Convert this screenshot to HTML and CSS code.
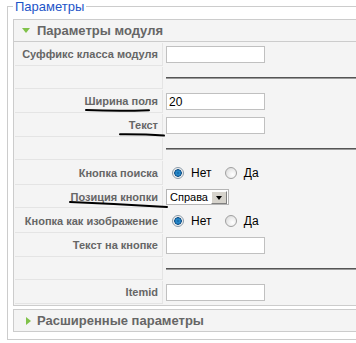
FILE: index.html
```html
<!DOCTYPE html>
<html lang="ru">
<head>
  <meta charset="UTF-8" />
  <title>Параметры</title>
  <link rel="stylesheet" href="styles.css">
</head>
<body>

  <div class="page">
    <fieldset class="adminform">
      <legend>Параметры</legend>

      <div class="panel">
        <h3 class="panel-title"><span class="arrow down"></span>Параметры модуля</h3>
        <table class="paramlist">
          <tr class="r-input">
            <td class="key">Суффикс класса модуля</td>
            <td class="val"><input type="text" class="text"></td>
          </tr>
          <tr class="r-spacer">
            <td class="key"></td>
            <td class="val"><div class="rule"></div></td>
          </tr>
          <tr class="r-input">
            <td class="key">Ширина поля</td>
            <td class="val"><input type="text" class="text" value="20"></td>
          </tr>
          <tr class="r-input">
            <td class="key">Текст</td>
            <td class="val"><input type="text" class="text"></td>
          </tr>
          <tr class="r-spacer">
            <td class="key"></td>
            <td class="val"><div class="rule"></div></td>
          </tr>
          <tr class="r-radio">
            <td class="key">Кнопка поиска</td>
            <td class="val">
              <span class="radio checked"></span><span class="opt">Нет</span>
              <span class="radio"></span><span class="opt">Да</span>
            </td>
          </tr>
          <tr class="r-select">
            <td class="key">Позиция кнопки</td>
            <td class="val">
              <div class="select"><span class="sel-text">Справа</span><span class="sel-btn"></span></div>
            </td>
          </tr>
          <tr class="r-radio">
            <td class="key">Кнопка как изображение</td>
            <td class="val">
              <span class="radio checked"></span><span class="opt">Нет</span>
              <span class="radio"></span><span class="opt">Да</span>
            </td>
          </tr>
          <tr class="r-input">
            <td class="key">Текст на кнопке</td>
            <td class="val"><input type="text" class="text"></td>
          </tr>
          <tr class="r-spacer">
            <td class="key"></td>
            <td class="val"><div class="rule"></div></td>
          </tr>
          <tr class="r-input">
            <td class="key">Itemid</td>
            <td class="val"><input type="text" class="text"></td>
          </tr>
        </table>
      </div>

      <div class="panel">
        <h3 class="panel-title"><span class="arrow right"></span>Расширенные параметры</h3>
      </div>
    </fieldset>

    <!-- hand-drawn marks over the labels -->
    <svg class="marks" width="356" height="343" viewBox="0 0 356 343">
      <path d="M86 110 Q118 111.5 149 110.2" />
      <path d="M120 134.2 Q145 134 164 135.6" />
      <path d="M70 202 Q120 204 167 207" />
    </svg>
  </div>

</body>
</html>
```

FILE: styles.css
```css
html, body {
  margin: 0;
  overflow: hidden;
}

body {
  background: #fff;
  font-family: "Liberation Sans", Arial, sans-serif;
}

.page {
  position: relative;
  width: 356px;
  height: 343px;
  overflow: hidden;
}

/* the form runs on past the right edge of the shot, so no right borders */
.adminform {
  margin: 0 0 0 7px;
  padding: 6px 0 7px 5px;
  border: 1px solid #ccc;
  border-right: none;
  width: 420px;
  min-width: 420px;
}

.adminform legend {
  color: #1d55c8;
  font-size: 13px;
  line-height: 13px;
  padding: 0 2px;
}

.panel {
  min-width: 410px;
  border: 1px solid #ccc;
  border-right: none;
  background: #f4f4f4;
  margin-bottom: 3px;
}

.panel:last-child {
  margin-bottom: 0;
}

.panel-title {
  margin: 0;
  height: 21px;
  padding-left: 8px;
  display: flex;
  align-items: center;
  font-size: 13px;
  font-weight: bold;
  color: #666;
  background: #f4f4f4;
}

.panel .paramlist {
  border-top: 1px solid #ccc;
}

.arrow {
  width: 0;
  height: 0;
}

.arrow.down {
  border-left: 4px solid transparent;
  border-right: 4px solid transparent;
  border-top: 5px solid #80c24a;
  margin-right: 7px;
}

.arrow.right {
  border-top: 4.5px solid transparent;
  border-bottom: 4.5px solid transparent;
  border-left: 5px solid #80c24a;
  margin-left: 4px;
  margin-right: 6px;
}

.paramlist {
  width: 100%;
  min-width: 410px;
  border-spacing: 1px;
}

.paramlist td {
  padding: 0;
}

.r-input { height: 23px; }
.r-spacer { height: 22px; }
.r-radio { height: 24px; }
.r-select { height: 22px; }

.key {
  width: 143px;
  padding-right: 4px !important;
  text-align: right;
  font-size: 11px;
  font-weight: bold;
  color: #666;
  background: #f4f4f4;
  border-right: 1px solid #e4e4e4;
  border-bottom: 1px solid #e4e4e4;
}

.val {
  padding-left: 2px !important;
  font-size: 12px;
  color: #000;
}

.text {
  display: block;
  box-sizing: border-box;
  width: 99px;
  height: 17px;
  margin: 0;
  padding: 0 2px;
  border: 1px solid #c0c0c0;
  background: #fff;
  font-family: "Liberation Sans", Arial, sans-serif;
  font-size: 12px;
  color: #000;
}

.rule {
  height: 0;
  border-top: 1px solid #555;
  border-bottom: 1px solid #9a9a9a;
}

.radio {
  display: inline-block;
  vertical-align: middle;
  box-sizing: border-box;
  width: 12px;
  height: 12px;
  margin: 0 7px 0 6px;
  border-radius: 50%;
  border: 1px solid #a0a0a0;
  background: radial-gradient(circle at 65% 65%, #fff 0, #f0f0f0 40%, #d4d4d4 100%);
}

.radio.checked {
  border-color: #8a9aa8;
  background: radial-gradient(circle at 50% 50%, #0b5fa0 0, #2a8fd0 2px, #0e4f88 3.5px, #e6e6e6 4px, #ffffff 5.5px);
}

.opt {
  vertical-align: middle;
  margin-right: 2px;
}

.opt + .radio {
  margin-left: 8px;
}

.select {
  display: flex;
  align-items: center;
  box-sizing: border-box;
  width: 63px;
  height: 16px;
  border: 1px solid #b5b5b5;
  background: #fff;
}

.sel-text {
  flex: 1;
  padding-left: 3px;
  font-size: 11px;
  line-height: 14px;
}

.sel-btn {
  position: relative;
  box-sizing: border-box;
  width: 16px;
  height: 13px;
  margin-right: 1px;
  background: #d6d3cc;
  border: 1px solid;
  border-color: #fff #808080 #808080 #fff;
}

.sel-btn::after {
  content: "";
  position: absolute;
  left: 4px;
  top: 4px;
  border-left: 3.5px solid transparent;
  border-right: 3.5px solid transparent;
  border-top: 4px solid #000;
}

.marks {
  position: absolute;
  top: 0;
  left: 0;
  pointer-events: none;
}

.marks path {
  fill: none;
  stroke: #000;
  stroke-width: 2;
  stroke-linecap: round;
}
```
